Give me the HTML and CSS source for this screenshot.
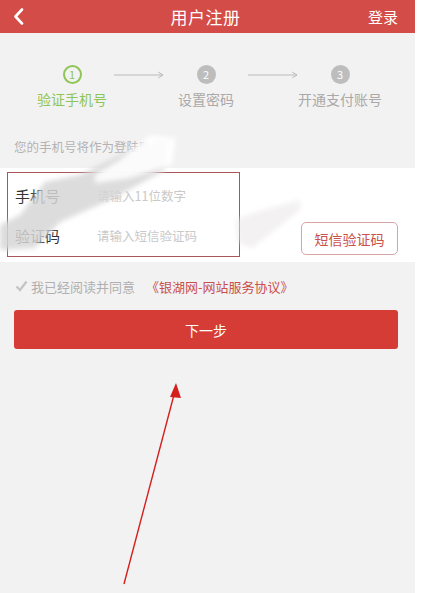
FILE: index.html
```html
<!DOCTYPE html>
<html lang="zh-CN">
<head>
<meta charset="utf-8">
<title>用户注册</title>
<link rel="stylesheet" href="styles.css">
</head>
<body>
<div class="page">
  <header class="topbar">
    <span class="back">
      <svg width="11" height="17" viewBox="0 0 11 17"><path d="M9 1.5 L2.5 8.5 L9 15.5" fill="none" stroke="#fff" stroke-width="2.6" stroke-linecap="round" stroke-linejoin="round"/></svg>
    </span>
    <h1 class="title">用户注册</h1>
    <span class="login">登录</span>
  </header>

  <section class="steps">
    <div class="step active">
      <span class="dot">1</span>
      <span class="label">验证手机号</span>
    </div>
    <div class="arrow"><svg width="52" height="8" viewBox="0 0 52 8"><path d="M0 4 H51 M46 1 L51 4 L46 7" fill="none" stroke="#b8b8b8" stroke-width="1"/></svg></div>
    <div class="step">
      <span class="dot">2</span>
      <span class="label">设置密码</span>
    </div>
    <div class="arrow"><svg width="52" height="8" viewBox="0 0 52 8"><path d="M0 4 H51 M46 1 L51 4 L46 7" fill="none" stroke="#b8b8b8" stroke-width="1"/></svg></div>
    <div class="step">
      <span class="dot">3</span>
      <span class="label">开通支付账号</span>
    </div>
  </section>

  <p class="hint">您的手机号将作为登陆账号</p>

  <section class="form-band">
    <div class="field-box">
      <div class="field-row"><span class="field-label">手机号</span><span class="placeholder">请输入11位数字</span></div>
      <div class="field-row"><span class="field-label">验证码</span><span class="placeholder">请输入短信验证码</span></div>
    </div>
    <button class="sms-btn">短信验证码</button>
  </section>

  <div class="agree">
    <svg class="check" width="13" height="12" viewBox="0 0 13 12"><path d="M1.5 6.5 L5 10 L11.5 1.5" fill="none" stroke="#c4c4c4" stroke-width="2.2"/></svg>
    <span class="agree-text">我已经阅读并同意</span>
    <span class="agree-link">《银湖网-网站服务协议》</span>
  </div>

  <div class="next-wrap"><button class="next-btn">下一步</button></div>

  <svg class="smudge" width="415" height="140" viewBox="0 0 415 140">
    <defs><filter id="b"><feGaussianBlur stdDeviation="2.5"/></filter></defs>
    <g filter="url(#b)">
      <polygon points="0,95 0,120 35,118 60,92 110,70 165,40 168,10 130,20 80,45 45,52 20,85" fill="#d6d6d6" opacity="0.85"/>
      <polygon points="95,53 130,48 172,35 176,8 150,5 120,30 95,45" fill="#ffffff" opacity="0.9"/>
      <polygon points="236,90 250,84 300,70 300,80 252,118 238,112" fill="#ebe7e7" opacity="0.6"/>
    </g>
  </svg>

  <svg class="pointer" width="80" height="215" viewBox="0 0 80 215">
    <line x1="16" y1="207" x2="67" y2="14" stroke="#d41f1f" stroke-width="1.4"/>
    <polygon points="68,6 62,20 73,21" fill="#d41f1f"/>
  </svg>
</div>
</body>
</html>
```

FILE: styles.css
```css
* { box-sizing: border-box; }

html, body {
  margin: 0;
  padding: 0;
  background: #ffffff;
}

body {
  width: 421px;
  height: 593px;
  overflow: hidden;
  font-family: "Noto Sans CJK SC", "Noto Sans", "Liberation Sans", sans-serif;
}

.page {
  position: relative;
  width: 415px;
  height: 593px;
  background: #f3f2f2;
}

.topbar {
  height: 33px;
  background: #d44c47;
  display: grid;
  grid-template-columns: 1fr auto 1fr;
  align-items: center;
  padding: 0 17px 0 13px;
  color: #ffffff;
}

.back { display: flex; align-items: center; }

.title {
  margin: 0;
  font-size: 17px;
  font-weight: 400;
  letter-spacing: 0.5px;
}

.login {
  justify-self: end;
  font-size: 15px;
}

.steps {
  display: flex;
  align-items: flex-start;
  padding: 32px 0 0 30px;
}

.step {
  width: 84px;
  display: flex;
  flex-direction: column;
  align-items: center;
  gap: 6px;
}

.dot {
  width: 19px;
  height: 19px;
  border-radius: 50%;
  background: #bdbdbd;
  color: #ffffff;
  font-size: 11px;
  line-height: 19px;
  text-align: center;
}

.step.active .dot {
  background: transparent;
  border: 2px solid #8ec556;
  color: #8ec556;
  line-height: 15px;
}

.label {
  font-size: 14px;
  color: #a9a9a9;
  line-height: 18px;
  white-space: nowrap;
}

.step.active .label { color: #8ec556; }

.arrow {
  width: 50px;
  height: 19px;
  display: flex;
  align-items: center;
  justify-content: center;
}

.hint {
  margin: 31px 0 0;
  padding-left: 14px;
  font-size: 12.5px;
  line-height: 16px;
  color: #b3b3b3;
}

.form-band {
  margin-top: 13px;
  background: #ffffff;
  height: 94px;
  display: flex;
  align-items: flex-end;
  justify-content: space-between;
  padding: 4px 17px 5px 7px;
}

.field-box {
  width: 233px;
  height: 85px;
  border: 1px solid #a8565a;
  display: flex;
  flex-direction: column;
}

.field-row {
  flex: 1;
  display: flex;
  align-items: center;
  padding-left: 7px;
}

.field-row:first-child { padding-top: 2px; }

.field-label {
  width: 82px;
  font-size: 15px;
  color: #333333;
}

.placeholder {
  font-size: 12.5px;
  color: #c9c9c9;
}

.sms-btn {
  width: 97px;
  height: 33px;
  margin-bottom: 2px;
  border: 1px solid #d6a6a6;
  border-radius: 5px;
  background: #ffffff;
  color: #c9504c;
  font-family: inherit;
  font-size: 14px;
  padding: 0;
}

.agree {
  display: flex;
  align-items: center;
  height: 18px;
  margin-top: 15px;
  padding-left: 15px;
}

.check { margin-right: 3px; }

.agree-text {
  font-size: 13px;
  color: #b0b0b0;
}

.agree-link {
  margin-left: 11px;
  font-size: 13px;
  color: #c8504c;
}

.next-wrap {
  padding: 0 17px 0 14px;
  margin-top: 15px;
}

.next-btn {
  width: 100%;
  height: 39px;
  border: none;
  border-radius: 3px;
  background: #d63c36;
  color: #ffffff;
  font-family: inherit;
  font-size: 14px;
  padding: 0;
}

.smudge {
  position: absolute;
  left: 0;
  top: 130px;
  pointer-events: none;
}

.pointer {
  position: absolute;
  left: 108px;
  top: 377px;
}
```
